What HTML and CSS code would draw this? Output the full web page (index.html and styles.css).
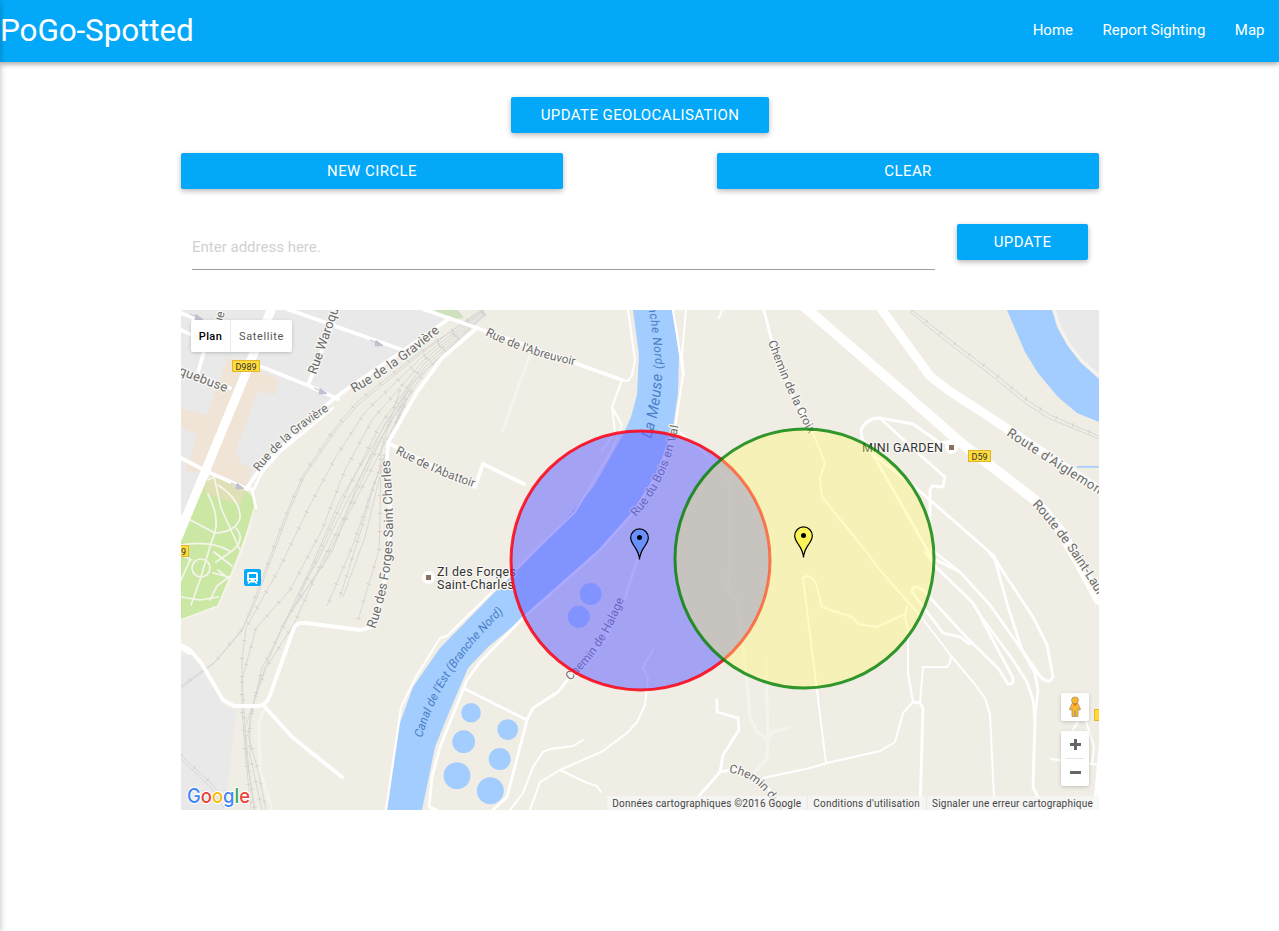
FILE: index.html
```html
<!DOCTYPE html>
<html lang="fr">
<head>
<meta charset="utf-8">
<title>PoGo-Spotted</title>
<link rel="stylesheet" href="styles.css">
</head>
<body>
<div class="drawer-edge"></div>
<nav class="navbar">
  <a class="brand">PoGo-Spotted</a>
  <div class="nav-links"><a>Home</a><a>Report Sighting</a><a>Map</a></div>
</nav>
<main class="container">
  <div class="geo-row"><button class="btn btn-geo">Update geolocalisation</button></div>
  <div class="circle-row"><button class="btn">New circle</button><button class="btn">Clear</button></div>
  <form class="address-row">
    <input class="address" type="text" placeholder="Enter address here.">
    <button class="btn btn-update" type="button">Update</button>
  </form>
  <section class="map">
    <svg class="map-canvas" viewBox="181 310 918 500" width="918" height="500">
      <defs>
        <path id="p-grav1" d="M259 472Q285 437 333 408"/>
        <path id="p-grav2" d="M354 393Q398 368 444 328"/>
        <path id="p-forges" d="M375 629Q394 575 393 520Q392 485 389 450"/>
        <path id="p-abr" d="M485 335Q528 357 584 367"/>
        <path id="p-abat" d="M395 453Q434 475 482 490"/>
        <path id="p-nord" d="M646 296Q654 335 656 374"/>
        <path id="p-meuse" d="M651 439Q662 403 662 370"/>
        <path id="p-bois" d="M636 517Q670 480 680 418"/>
        <path id="p-hal" d="M570 681Q607 648 625 596"/>
        <path id="p-canal" d="M422 738Q440 672 504 612"/>
        <path id="p-croix" d="M768 342Q786 392 812 440"/>
        <path id="p-aig" d="M1006 435Q1054 467 1106 499"/>
        <path id="p-laur" d="M1032 505Q1068 543 1106 610"/>
        <path id="p-chem" d="M729 773Q760 775 783 820"/>
      </defs>

      <rect x="181" y="310" width="918" height="500" fill="#f0ede5"/>
      <!-- built-up areas -->
      <g fill="#e9e9e9">
        <path d="M181 310H425L446 320L420 338L343 393L262 465L247 488L181 460Z"/>
        <path d="M181 460L205 472L181 532Z"/>
        <path d="M181 655H193L223 704L236 712L228 783L226 810H181Z"/>
        <path d="M1052 310H1099V379L1080 362L1067 345L1057 327Z"/>
      </g>
      <path fill="#f0e4d7" d="M228 357L262 372L279 379L275 395L258 391L235 453L240 457L239 462L253 469L245 488L208 473L185 471L190 458L197 434L181 428V408L207 415Z"/>
      <path fill="#cae7a4" d="M206 480L212 477L247 491L256 501V508L218 606L181 620V541Z"/>
      <path fill="#dfe0b5" d="M204 488L211 475L246 489L240 505L206 493Z"/>
      <path fill="#cfe0bd" d="M434 310H458L464 318L448 320Z"/>

      <!-- water -->
      <g fill="#a3ccff">
        <path d="M633 310L639 355L637 395L631 417L623 435L593 488L567 518L523 565L497 590L440 648L413 687L400 723L387 810H422L435 747L450 710L468 668L488 647L523 618L583 565L613 538L647 495L663 455L673 428L678 393L679 355L672 310Z"/>
        <path d="M1007 310L1025 352L1038 373L1058 397L1077 413L1099 422V379L1080 362L1067 345L1057 327L1052 310Z"/>
        <rect x="1077" y="466" width="22" height="1.6"/>
        <circle cx="471" cy="712.7" r="9.8"/><circle cx="507.7" cy="729.6" r="10.4"/>
        <circle cx="463.7" cy="741.7" r="11.4"/><circle cx="499.7" cy="759" r="11"/>
        <circle cx="457" cy="775.7" r="13.4"/><circle cx="490.3" cy="790.7" r="13.5"/>
        <circle cx="590.7" cy="594" r="11"/><circle cx="578.7" cy="616.7" r="11"/>
      </g>

      <!-- railways: thin track, then ties -->
      <g class="rail">
        <path id="r1" d="M483 310L420 352L357 402L335 428L303 475L287 512L267 565L253 603L243 628L215 662L181 686"/>
        <path id="r2" d="M480 310L418 356L359 404L337 429L305 475L289 512L269 565L255 603L241 632L213 664L181 688"/>
        <path id="r3" d="M482 311L421 358L365 412L337 455L310 505L280 567L246 628L242 660L242 710L246 760L251 810"/>
        <path id="r4" d="M482 312L424 360L372 420L345 470L322 530L290 590L256 628L242 680L244 712L247 760L255 810"/>
        <path id="r5" d="M484 312L424 364L380 425L350 485L300 595L262 668L250 720V755L262 810"/>
        <path id="r6" d="M484 314L425 367L384 425L357 485L333 550L283 624L265 668L245 728L249 770L254 810"/>
        <path id="r7" d="M485 314L426 370L388 425L362 480L320 566L294 624L266 668L254 700L248 735L258 770L266 810"/>
        <path id="r8" d="M486 314L410 385L376 440L340 500L312 565L284 624"/>
        <path id="r9" d="M410 388L380 440L345 505L318 560L297 596"/>
        <path id="r10" d="M412 390L384 445L354 503L323 565L295 605"/>
        <path id="r11" d="M406 398L371 492L355 540L327 606"/>
        <path id="r12" d="M404 405L374 485L361 530L340 597"/>
        <path id="r13" d="M401 405L379 480L365 537L343 597"/>
        <path id="r14" d="M400 390L381 450L380 520L379 550L358 620"/>
        <path id="r16" d="M181 755L197 770L213 785L227 805"/>
        <path id="r17" d="M181 759L196 773L211 788L224 808"/>
        <path id="r18" d="M912 310L945 336L990 370L1027 400L1050 415L1099 436"/>
        <path id="r19" d="M910 312L943 339L988 373L1025 403L1048 418L1099 439"/>
      </g>
      <g class="ties">
        <use href="#r1"/><use href="#r3"/><use href="#r4"/><use href="#r5"/><use href="#r7"/><use href="#r10"/><use href="#r11"/><use href="#r12"/><use href="#r14"/><use href="#r16"/><use href="#r18"/>
      </g>

      <!-- tracks and footpaths -->
      <g class="road faint">
        <path d="M531 352L502 432"/>
        <path d="M264 710L259 722L260 770L272 810"/>
        <path d="M707 455L727 478L730 492V550L728 593L737 600L745 663L750 717L757 732L768 740L767 758L755 772"/>
        <path d="M766 658L768 740L773 731L788 728"/>
        <path d="M1054 310L1060 328L1070 346L1083 362L1099 376"/>
      </g>
      <g class="road w-xs">
        <path d="M208 480L214 477L221 508L240 550"/>
        <path d="M218 485Q241 500 240 518Q236 532 215 533L181 515"/>
        <path d="M208 494Q222 520 212 540L200 580L191 605"/>
        <path d="M181 545Q210 540 230 551"/>
        <path d="M236 528Q246 540 232 551L216 562"/>
        <path d="M214 552L232 566M218 570L230 580M213 573L229 577L217 586L210 600M190 560L181 580M181 597L200 600L218 597M181 555L192 560"/>
        <circle cx="201" cy="568" r="9"/>
        <path d="M256 503L242 550L218 606L181 620"/>
      </g>

      <!-- streets -->
      <g class="road w-s">
        <path d="M497 587L447 636L440 638L416 677L401 707L386 810"/>
        <path d="M628 310L635 360L632 375L628 381L622 380L612 407L615 432L602 450"/>
        <path d="M612 407L622 425L613 448L575 512L523 562L497 588"/>
        <path d="M673 310L678 340L683 375L675 428L707 455M686 310L682 355L684 375"/>
        <path d="M510 810L523 793L533 767L543 752L550 749L573 746L583 740"/>
        <path d="M530 810L540 782L560 770L603 751L627 733L637 722L645 705L648 678L643 667L653 650"/>
        <path d="M560 770L585 782L597 786L601 792"/>
        <path d="M813 433L825 463L820 478L822 497L865 550L880 570L922 618L952 657L973 682L985 698L990 715L994 797V810"/>
        <path d="M951 657L950 663L947 667H923L920 703"/>
        <path d="M907 606L905 617L908 630V673L913 702L903 713L895 742L880 751L827 763L810 768L763 778"/>
        <path d="M826 763L803 578L807 576L812 578L816 583L822 607L852 617L858 624L877 627L905 614"/>
        <path d="M1080 718L1066 742M1051 759L1099 765M1085 718L1094 747L1092 764"/>
        <path d="M719 318L722 310"/>
      </g>
      <g class="road w-m">
        <path d="M247 489H254L262 472L280 452L333 408M256 508L252 490"/>
        <path d="M523 618L600 550L633 513L660 470L675 428"/>
        <path d="M523 618L480 662L467 680L463 690L440 747L432 777L429 807L441 812"/>
        <path d="M465 689L527 720L507 797L493 810M527 720L533 708L558 692L569 678L605 640L625 598L637 560"/>
        <path d="M764 310L771 338L790 390L813 433"/>
        <path d="M955 441L940 443L913 424L880 418Q866 418 861 430L862 438L875 458L932 558L960 572L990 605L1022 650L1035 673L1038 690L1035 717"/>
        <path d="M880 418L920 455L945 477L943 487L932 486L930 490V522"/>
        <path d="M875 456L915 487L993 555L1002 570L1033 617L1047 645L1053 677L1050 681Q1042 682 1036 670L1022 650L1008 607L995 560L987 550"/>
        <path d="M932 550L960 572M925 552L937 568L972 602L982 618L1013 660L1027 682L1033 700L1035 720L1033 787L1038 797L1050 810"/>
        <path d="M981 618L1013 678Q1014 685 1008 684L998 668L967 638L923 590Q912 583 912 592L943 633L960 637L969 644"/>
        <path d="M913 702L920 703L923 708L920 810"/>
        <path d="M717 700V712L738 718L739 730L723 755L720 772L698 797L688 810M720 772L735 769Q765 775 784 812"/>
      </g>
      <g class="road w-l">
        <path d="M423 309L477 328L575 363L622 380"/>
        <path d="M477 328L442 358L417 392L388 443L387 458Q398 560 372 627L360 630L306 623Q296 622 294 628L270 695Q266 706 258 706H234L223 700L202 664L190 650L181 645"/>
        <path d="M181 648L190 653M264 706L292 737L342 777"/>
        <path d="M388 443L475 487L483 464L524 484"/>
        <path d="M181 313L200 321M181 330L198 338M206 345L198 372M181 370L230 388"/>
        <path d="M287 309L397 348L407 352M262 367L307 385L338 399M338 310L308 385"/>
        <path d="M450 318L420 339L343 392L325 406L262 466L247 488"/>
        <path d="M181 458L208 472L247 489"/>
      </g>
      <g class="road">
        <path stroke-width="9" d="M275 300L248 368L205 472L178 537"/>
        <path stroke-width="10" d="M800 303L880 372L960 442L1035 500L1060 530L1080 565L1099 600"/>
        <path stroke-width="9" d="M877 303L895 328L930 376L948 390L1000 424L1102 492"/>
        <path stroke-width="5" d="M1102 738L1095 812"/>
      </g>

      <!-- one-way arrows -->
      <g class="oneway">
        <path d="M190 314L198 317.500M196 314.500L203 319.500L195 320Z"/>
        <path d="M370 340L378 343.500M376 340.500L383 345.500L375 346Z"/>
        <path d="M314 388L322 391.500M320 388.500L327 393.500L319 394Z"/>
        <path d="M231 483L239 486.500M237 483.500L244 488.500L236 489Z"/>
      </g>

      <!-- street labels -->
      <g class="label">
        <text font-size="12"><textPath href="#p-grav1" textLength="94">Rue de la Gravière</textPath></text>
        <text font-size="13"><textPath href="#p-grav2" textLength="106">Rue de la Gravière</textPath></text>
        <text font-size="13"><textPath href="#p-forges" textLength="171">Rue des Forges Saint Charles</textPath></text>
        <text font-size="12"><textPath href="#p-abr" textLength="95">Rue de l'Abreuvoir</textPath></text>
        <text font-size="12"><textPath href="#p-abat" textLength="86">Rue de l'Abattoir</textPath></text>
        <text font-size="13" transform="translate(316 375) rotate(-71)">Rue Waroquet</text>
        <text font-size="13" transform="translate(178 374) rotate(21)" textLength="51">quebuse</text>
        <text font-size="12" transform="translate(221 325) rotate(-73)">ue</text>
        <text font-size="12"><textPath href="#p-bois" textLength="102">Rue du Bois en Val</textPath></text>
        <text font-size="12"><textPath href="#p-hal" textLength="99">Chemin de Halage</textPath></text>
        <text font-size="12"><textPath href="#p-croix" textLength="101">Chemin de la Croix</textPath></text>
        <text font-size="13"><textPath href="#p-aig" textLength="115">Route d'Aiglemont</textPath></text>
        <text font-size="13"><textPath href="#p-laur">Route de Saint-Laurent</textPath></text>
        <text font-size="12"><textPath href="#p-chem" textLength="71">Chemin du M</textPath></text>
      </g>
      <g class="label water">
        <text font-size="12"><textPath href="#p-nord" textLength="74">ranche Nord)</textPath></text>
        <text font-size="15"><textPath href="#p-meuse" textLength="66">La Meuse</textPath></text>
        <text font-size="12"><textPath href="#p-canal" textLength="152">Canal de l'Est (Branche Nord)</textPath></text>
      </g>

      <!-- places -->
      <g class="label place">
        <text x="437" y="575.500" textLength="79">ZI des Forges</text>
        <text x="437" y="588.500" textLength="77">Saint-Charles</text>
        <text x="862" y="451.500" textLength="81">MINI GARDEN</text>
      </g>
      <g>
        <circle cx="428.500" cy="577.500" r="6.500" fill="#fff"/><path fill="#8d6e63" d="M426 575h5v5h-5z"/>
        <circle cx="951.500" cy="447.500" r="6.500" fill="#fff"/><path fill="#8d6e63" d="M949 445h5v5h-5z"/>
      </g>
      <g class="shield">
        <rect x="232.500" y="360.500" width="27" height="11"/><text x="246" y="369.500">D989</text>
        <rect x="968.500" y="450.500" width="22" height="11"/><text x="979.500" y="459.500">D59</text>
        <rect x="165.500" y="545.500" width="23" height="11"/><text x="178" y="554.500">D59</text>
        <rect x="1094.500" y="709.500" width="23" height="11"/><text x="1104" y="718.500">D5</text>
      </g>
      <g>
        <rect x="244" y="569" width="17" height="17" rx="2" fill="#03a9fc"/>
        <path fill="#fff" fill-rule="evenodd" d="M249 572h7q2 0 2 2v6q0 2-1.500 2l1 2h-1.500l-1-1.500h-5l-1 1.500h-1.500l1-2q-1.500 0-1.500-2v-6q0-2 2-2zM249 574v4h7v-4zM249 579.500v1.500h1.500v-1.500zM254.500 579.500v1.500h1.500v-1.500z"/>
      </g>

      <!-- spotted areas -->
      <circle cx="640.500" cy="560.500" r="129.500" fill="#6664ff" fill-opacity=".55" stroke="#ff0010" stroke-opacity=".85" stroke-width="3"/>
      <circle cx="804.500" cy="558.500" r="129.500" fill="#fcf774" fill-opacity=".4"/>
      <circle cx="804.500" cy="558.500" r="129.500" fill="none" stroke="#008000" stroke-opacity=".8" stroke-width="3"/>
      <g stroke="#000" stroke-width="1.200">
        <path fill="#6991fd" d="M639.500 559.500C639 552 636.500 549.500 633.800 545.500C631.800 542.500 630.700 540.500 630.700 537.700A8.800 8.800 0 0 1 648.300 537.700C648.300 540.500 647.200 542.500 645.200 545.500C642.500 549.500 640 552 639.500 559.500Z"/>
        <path fill="#fcf357" d="M803.500 557.500C803 550 800.500 547.500 797.800 543.500C795.800 540.500 794.700 538.500 794.700 535.700A8.800 8.800 0 0 1 812.300 535.700C812.300 538.500 811.200 540.500 809.200 543.500C806.500 547.500 804 550 803.500 557.500Z"/>
      </g>
      <circle cx="639.500" cy="537.500" r="2.500"/><circle cx="803.500" cy="535.500" r="2.500"/>

      <text class="logo" x="187" y="803" textLength="63" lengthAdjust="spacingAndGlyphs"><tspan fill="#4285f4">G</tspan><tspan fill="#ea4335">o</tspan><tspan fill="#fbbc05">o</tspan><tspan fill="#4285f4">g</tspan><tspan fill="#34a853">l</tspan><tspan fill="#ea4335">e</tspan></text>
    </svg>

    <div class="map-types"><span class="type-on">Plan</span><span>Satellite</span></div>
    <div class="map-tools">
      <div class="tool pegman">
        <svg width="14" height="22" viewBox="0 0 14 22"><path fill="#fbb829" stroke="#a89264" stroke-width=".8" d="M4 7.500h6l2.500 6-1.300.8-1.200-2V20.500H7.500V15h-1v5.500H4V12.300l-1.200 2-1.300-.8z"/><circle cx="7" cy="4.300" r="3.400" fill="#fbb829" stroke="#a89264" stroke-width=".8"/><path d="M4.800 7.800h4.400L7 10.500z" fill="#e5762a"/></svg>
      </div>
      <div class="tool zoom">
        <svg width="28" height="55" viewBox="0 0 28 55"><path d="M9 13.500h11M14.500 8v11M9 41.500h11" stroke="#666" stroke-width="3" fill="none"/><path d="M5 27.500h18" stroke="#e6e6e6"/></svg>
      </div>
    </div>
    <div class="credits"><span>Données cartographiques ©2016 Google</span><span>Conditions d'utilisation</span><span>Signaler une erreur cartographique</span></div>
  </section>
</main>
</body>
</html>
```

FILE: styles.css
```css
* { box-sizing: border-box; }

body {
  margin: 0;
  min-height: 931px;
  background: #fff;
  font-family: Roboto, "Liberation Sans", sans-serif;
  font-size: 15px;
  overflow: hidden;
}

/* closed side drawer, only its shadow shows */
.drawer-edge {
  position: absolute;
  top: 0;
  bottom: 0;
  left: -10px;
  z-index: 2;
  width: 10px;
  box-shadow: 0 2px 5px rgba(0, 0, 0, .16), 0 2px 10px rgba(0, 0, 0, .12);
}

.navbar {
  display: flex;
  justify-content: space-between;
  height: 62px;
  line-height: 60px;
  color: #fff;
  background: #03a9f8;
  box-shadow: 0 2px 5px rgba(0, 0, 0, .16), 0 2px 5px rgba(0, 0, 0, .22);
}

.brand { font-size: 31.5px; line-height: 61px; letter-spacing: -.13px; }
.nav-links { display: flex; }
.nav-links a { padding: 0 14.5px 0 15px; }

.container {
  width: 918px;
  margin: 35px 0 0 181px;
}

.btn {
  height: 36px;
  padding: 0;
  border: 0;
  border-radius: 2px;
  color: #fff;
  background: #03a9f8;
  box-shadow: 0 2px 5px rgba(0, 0, 0, .16), 0 2px 6px rgba(0, 0, 0, .14);
  font: 15px/36px Roboto, "Liberation Sans", sans-serif;
  letter-spacing: .42px;
  text-transform: uppercase;
}

.geo-row { display: flex; justify-content: center; }
.btn-geo { width: 258px; }

.circle-row { display: flex; justify-content: space-between; margin-top: 20px; }
.circle-row .btn { width: 382px; }

.address-row {
  display: flex;
  justify-content: space-between;
  align-items: flex-start;
  margin: 35px 0 0;
  padding: 0 11px;
}

.address {
  width: 743px;
  height: 46px;
  padding: 0;
  border: 0;
  border-bottom: 1px solid #9e9e9e;
  background: transparent;
  font: 15px Roboto, "Liberation Sans", sans-serif;
}
.address::placeholder { color: #d1d1d1; }
.btn-update { width: 131px; }

.map { position: relative; width: 918px; height: 500px; margin-top: 40px; overflow: hidden; }
.map-canvas { display: block; }

.rail { fill: none; stroke: #d6d5d2; stroke-width: .9; }
.ties { fill: none; stroke: #d2d1cf; stroke-width: 4; stroke-dasharray: 1 17; }

.road { fill: none; stroke: #fff; stroke-linecap: round; stroke-linejoin: round; }
.faint { stroke: #f5f3ed; stroke-width: 3; }
.w-xs { stroke: #f6f5ec; stroke-width: 1.7; }
.w-s { stroke-width: 2; }
.w-m { stroke-width: 2.8; }
.w-l { stroke-width: 3.8; }
.oneway { fill: #c0c1d0; stroke: #c0c1d0; stroke-width: 1; }

.label { fill: #6b6b6b; stroke: #f8f7f3; stroke-width: 2.5px; paint-order: stroke; stroke-linejoin: round; }
.water { fill: #4a7fc6; stroke: none; font-style: italic; }
.place { fill: #333; font-size: 12.5px; }

.shield rect { fill: #ffdc3a; stroke: #e3b52a; }
.shield text { fill: #333; font-size: 9px; text-anchor: middle; }
.logo { font: 500 20px Inter, sans-serif; stroke: #fff; stroke-width: 2px; paint-order: stroke; }

.map-types {
  position: absolute;
  top: 10px;
  left: 10px;
  display: flex;
  border-radius: 2px;
  background: #fff;
  box-shadow: 0 1px 4px -1px rgba(0, 0, 0, .3);
  color: #565656;
  font-size: 11px;
  line-height: 33px;
  height: 32px;
  letter-spacing: .6px;
}
.map-types span { width: 61px; text-align: center; }
.map-types .type-on { width: 40px; border-right: 1px solid #ebebeb; color: #000; font-weight: 500; letter-spacing: .4px; }

.map-tools { position: absolute; top: 383px; right: 10px; display: grid; gap: 10px; width: 28px; }
.tool { border-radius: 2px; background: #fff; box-shadow: 0 1px 4px -1px rgba(0, 0, 0, .3); }
.tool svg { display: block; }
.pegman { display: grid; place-items: center; height: 28px; }
.zoom { height: 55px; }

.credits {
  position: absolute;
  right: 0;
  bottom: 0;
  display: flex;
  height: 14px;
  font-size: 10px;
  line-height: 15px;
  color: #444;
  white-space: nowrap;
}
.credits span { padding: 0 6px 0 5px; background: rgba(245, 245, 245, .75); letter-spacing: .22px; }
.credits span + span { border-left: 1px solid #ebebe6; }
```
